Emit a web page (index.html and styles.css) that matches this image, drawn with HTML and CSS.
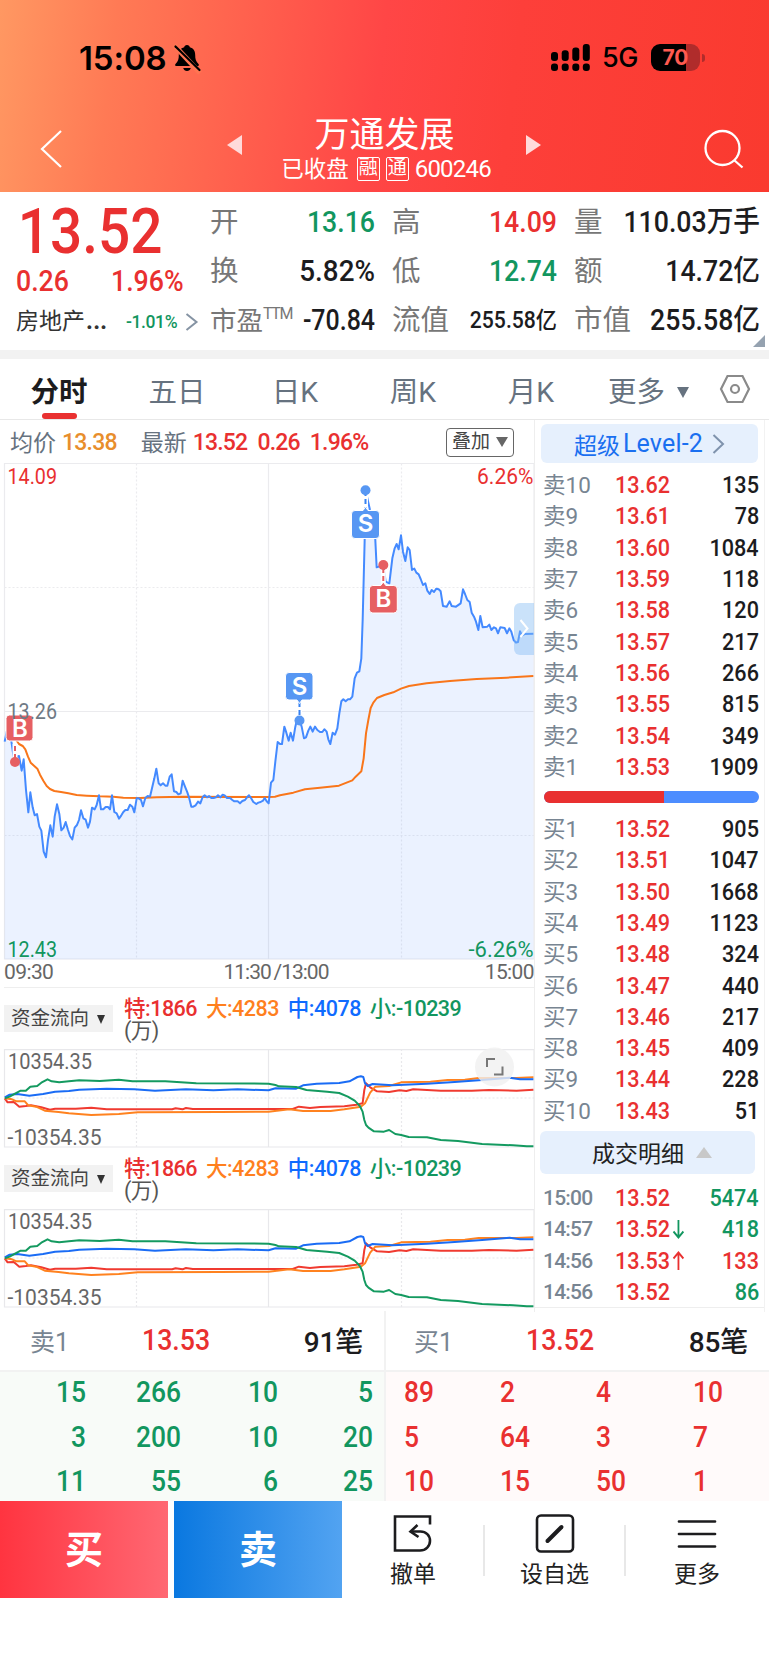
FILE: index.html
```html
<!DOCTYPE html>
<html lang="zh-CN">
<head>
<meta charset="utf-8">
<title>万通发展 600246</title>
<link rel="stylesheet" href="styles.css">
</head>
<body>
<div class="app">
  <header class="top">
    <div class="status">
      <span class="clock">15:08</span>
      <svg class="bell" width="27" height="28" viewBox="0 0 27 28"><path d="M13 1c-1.800 0-2.500 1-2.800 2.200C6.500 4.200 4.800 7 4.800 11c0 4-.6 6.300-3.300 9-.8 1-.4 2 .7 2h21.600c1.100 0 1.500-1 .7-2-2.700-2.700-3.300-5-3.300-9 0-4-1.700-6.800-5.400-7.800C15.500 2 14.800 1 13 1zM9.200 24h7.600c-.5 2-2 3-3.800 3s-3.300-1-3.800-3z"/><path d="M0 1 26 29" stroke="#ff7552" stroke-width="5"/><path d="M1.500 2.500 25.500 26" stroke="#000" stroke-width="2.200" stroke-linecap="round"/></svg>
      <svg class="signal" width="40" height="28" viewBox="0 0 40 28"><g><rect x="0" y="8" width="7" height="9" rx="3"/><rect x="10.700" y="6.300" width="7" height="10.700" rx="3"/><rect x="21.300" y="3.400" width="7" height="13.600" rx="3"/><rect x="31.800" y="0" width="7" height="17" rx="3"/><rect x="0" y="19.500" width="7" height="7.500" rx="3"/><rect x="10.700" y="19.500" width="7" height="7.500" rx="3"/><rect x="21.300" y="19.500" width="7" height="7.500" rx="3"/><rect x="31.800" y="19.500" width="7" height="7.500" rx="3"/></g></svg>
      <span class="net">5G</span>
      <span class="battery"><span class="level">70</span></span><i class="nub"></i>
    </div>
    <div class="nav">
      <svg class="back" width="24" height="42" viewBox="0 0 24 42"><path d="M22 3 3 21l19 18" fill="none" stroke="#fff" stroke-width="2.200"/></svg>
      <svg class="prev" width="15" height="20" viewBox="0 0 15 20"><path d="M15 0v20L0 10z" fill="#ffdada"/></svg>
      <div class="title"><h1>万通发展</h1><p><span>已收盘</span><b>融</b><b>通</b><em class="n">600246</em></p></div>
      <svg class="next" width="15" height="20" viewBox="0 0 15 20"><path d="M0 0v20l15-10z" fill="#ffdada"/></svg>
      <svg class="find" width="42" height="42" viewBox="0 0 42 42"><g fill="none" stroke="#fff" stroke-width="2.300"><circle cx="19.500" cy="20" r="17"/><path d="m31 32 8.500 7.500"/></g></svg>
    </div>
  </header>

  <section class="quote">
    <div class="price">
      <div class="big red">13.52</div>
      <div class="chg red"><span>0.26</span><span>1.96%</span></div>
      <div class="sector"><span>房地产<u>…</u></span><em class="green">-1.01%</em><svg width="13" height="18" viewBox="0 0 13 18"><path d="m1.500 1 10 8-10 8" fill="none" stroke="#8593a3" stroke-width="2"/></svg></div>
    </div>
    <dl class="stats">
      <dt>开</dt><dd class="green">13.16</dd><dt>高</dt><dd class="red">14.09</dd><dt>量</dt><dd>110.03万手</dd>
      <dt>换</dt><dd class="pct">5.82%</dd><dt>低</dt><dd class="green">12.74</dd><dt>额</dt><dd>14.72亿</dd>
      <dt class="ttm">市盈<sup>TTM</sup></dt><dd class="pe">-70.84</dd><dt>流值</dt><dd class="small">255.58亿</dd><dt>市值</dt><dd>255.58亿</dd>
    </dl>
    <i class="corner"></i>
  </section>

  <nav class="tabs">
    <span class="on">分时</span><span>五日</span><span>日K</span><span>周K</span><span>月K</span><span class="more">更多<i></i></span>
    <svg width="32" height="30" viewBox="0 0 32 30"><g fill="none" stroke="#8a8a8a" stroke-width="2.200"><path d="M8.500 2h15L30 15l-6.500 13h-15L2 15z"/><circle cx="16" cy="15" r="4"/></g></svg>
  </nav>

  <main class="body">
    <div class="left">
      <div class="avg"><span>均价</span><b class="amber">13.38</b><span class="gap">最新</span><b class="red">13.52</b><b class="red">0.26</b><b class="red">1.96%</b><button>叠加<i></i></button></div>
      <svg class="chart" width="534" height="498" viewBox="0 462 534 498">
        <g fill="none" stroke="#ebebee" stroke-width="1.200"><path d="M4.500 463.500h529.500v495.500h-529.500zM4.500 711.500h529.500M268.500 463.500v495.500"/><path d="M4.500 587.500h529.500M4.500 835.500h529.500M136.500 463.500v495.500M401.500 463.500v495.500" stroke-dasharray="2 2"/></g>
        <g transform="translate(0 460) scale(.33333)">
          <path fill="#4d8dff" fill-opacity=".11" d="M14 1498V845L20 815 27 800 35 850 40 885 45 907 50 890 57 888 65 932 71 898 78 990 85 1057 91 997 98 1042 104 1066 111 1062 118 1100 124 1112 131 1175 138 1192 144 1140 151 1096 158 1130 164 1070 171 1033 178 1062 184 1111 191 1103 197 1086 204 1110 210 1128 217 1138 224 1103 231 1095 237 1080 243 1051 250 1075 257 1079 264 1103 270 1085 276 1043 284 1048 290 1035 297 1006 303 1048 317 1041 330 1048 336 1006 343 1056 357 1076 370 1056 383 1050 390 1034 403 1057 410 1015 423 1020 429 1039 436 1014 450 1010 456 985 469 926 476 970 502 977 515 943 522 994 542 1000 548 962 562 997 574 1040 594 1025 608 1011 661 1012 674 1006 720 1030 747 1006 769 1032 794 1014 806 1030 813 968 820 960 826 905 833 846 846 852 853 800 866 842 872 818 879 842 892 775 905 800 912 835 931 800 945 800 960 816 980 815 991 852 998 818 1005 824 1012 805 1024 724 1050 718 1057 710 1064 655 1078 634 1084 595 1088 480 1094 240 1097 92 1110 150 1118 170 1125 220 1130 322 1150 315 1157 365 1168 370 1177 295 1190 252 1196 268 1203 226 1216 303 1223 262 1229 270 1236 330 1256 343 1269 375 1276 370 1289 402 1309 386 1322 394 1329 438 1368 440 1382 430 1389 388 1402 420 1409 426 1415 458 1428 485 1435 510 1441 468 1448 502 1488 505 1494 520 1514 504 1534 515 1548 548 1560 514 1600 521V1498z"/>
          <polyline class="ln amber-ln" points="27,792 35,805 45,835 57,852 68,858 76,868 84,890 92,908 102,917 112,926 120,944 130,962 140,978 150,987 163,993 183,996 205,1000 230,1005 260,1007 300,1009 340,1010 370,1013 420,1014 470,1012 550,1010 806,1011 825,1010 840,1006 880,998 915,988 960,983 1017,977 1057,961 1067,950 1084,934 1091,895 1098,820 1105,780 1112,744 1120,728 1131,714 1153,705 1180,697 1203,686 1227,678 1280,670 1350,663 1430,657 1520,653 1600,648"/>
          <polyline class="ln" points="14,845 20,815 27,800 35,850 40,885 45,907 50,890 57,888 65,932 71,898 78,990 85,1057 91,997 98,1042 104,1066 111,1062 118,1100 124,1112 131,1175 138,1192 144,1140 151,1096 158,1130 164,1070 171,1033 178,1062 184,1111 191,1103 197,1086 204,1110 210,1128 217,1138 224,1103 231,1095 237,1080 243,1051 250,1075 257,1079 264,1103 270,1085 276,1043 284,1048 290,1035 297,1006 303,1048 310,1048 317,1041 324,1041 330,1048 336,1006 343,1056 350,1060 357,1076 364,1066 370,1056 376,1050 383,1050 390,1034 397,1040 403,1057 410,1015 416,1015 423,1020 429,1039 436,1014 443,1008 450,1010 456,985 463,955 469,926 476,970 482,976 489,970 496,977 502,977 509,950 515,943 522,994 529,996 535,1003 542,1000 548,962 555,980 562,997 567,1012 574,1040 580,1040 587,1036 594,1025 601,1030 608,1011 614,1006 621,1012 627,1008 634,1014 641,1014 648,1012 654,1006 661,1012 668,1004 674,1006 681,1014 690,1014 697,1020 703,1024 713,1024 720,1030 727,1023 735,1020 741,1012 747,1006 753,1014 760,1026 769,1032 775,1028 782,1026 789,1022 794,1014 800,1024 806,1030 813,968 820,960 826,905 833,846 840,852 846,852 853,800 859,818 866,842 872,818 879,842 886,800 892,775 898,780 905,800 912,835 918,832 925,812 931,800 938,815 945,800 952,810 960,816 967,816 973,808 980,815 985,838 991,852 998,818 1005,824 1012,805 1018,760 1024,724 1030,718 1037,724 1044,718 1050,718 1057,710 1064,655 1071,638 1078,634 1084,595 1088,480 1094,240 1097,92 1110,150 1118,170 1125,220 1130,322 1150,315 1157,365 1168,370 1177,295 1184,265 1190,252 1196,268 1203,226 1209,275 1216,303 1223,262 1229,270 1236,330 1243,326 1249,338 1256,343 1262,357 1269,375 1276,370 1282,392 1289,402 1295,390 1302,396 1309,386 1316,388 1322,394 1329,438 1340,440 1349,424 1355,438 1368,440 1382,430 1389,388 1395,402 1402,420 1409,426 1415,458 1422,470 1428,485 1435,510 1441,468 1448,502 1462,500 1468,494 1474,510 1482,502 1488,505 1494,520 1501,502 1514,504 1521,520 1528,505 1534,515 1541,540 1548,548 1554,546 1560,514 1566,526 1574,522 1600,521"/>
        </g>
        <path d="M534 603h-14a6 6 0 0 0-6 6v40a6 6 0 0 0 6 6h14z" fill="#80b9f2" fill-opacity=".42"/>
        <path d="m520.500 620 7 8.500-7 8.500" fill="none" stroke="#fff" stroke-width="2"/>
        <g class="mk sell"><path d="M365.500 491v18" class="halo"/><path d="M365.500 491v22" class="dash"/><circle cx="365.500" cy="490.200" r="5"/><path class="bx" d="M355 510.500h8l2.500-3.500 2.500 3.500h8q3.500 0 3.500 3.500v21q0 3.500-3.500 3.500h-21q-3.500 0-3.500-3.500v-21q0-3.500 3.500-3.500z"/><text x="365.500" y="532">S</text></g>
        <g class="mk buy"><path d="M383.300 570v14" class="halo"/><path d="M383.300 568v18" class="dash"/><circle cx="383.300" cy="565" r="5"/><path class="bx" d="M373 585.500h7.800l2.500-3.500 2.500 3.500h8q3.500 0 3.500 3.500v20.500q0 3.500-3.500 3.500h-21q-3.500 0-3.500-3.500v-20.500q0-3.500 3.500-3.500z"/><text x="383.300" y="606.500">B</text></g>
        <g class="mk sell"><path d="M299.500 702v18" class="halo"/><path d="M299.500 702v18" class="dash"/><circle cx="299.500" cy="720.500" r="5"/><path class="bx" d="M289 672.500h20.500q3.500 0 3.500 3.500v20.500q0 3.500-3.500 3.500h-7.500l-2.500 3.500-2.500-3.500h-8q-3.500 0-3.500-3.500v-20.500q0-3.500 3.500-3.500z"/><text x="299.500" y="695">S</text></g>
        <g class="mk buy"><path d="M15 744v18" class="halo"/><path d="M15 746v16" class="dash"/><circle cx="15" cy="762" r="5"/><rect class="bx" x="6" y="715" width="27" height="26" rx="3.500"/><text x="20" y="737">B</text></g>
        <g class="axis"><text x="7.500" y="484" class="r" textLength="49.500" lengthAdjust="spacingAndGlyphs">14.09</text><text x="7.500" y="719" textLength="49.500" lengthAdjust="spacingAndGlyphs">13.26</text><text x="7.500" y="957" class="g" textLength="49.500" lengthAdjust="spacingAndGlyphs">12.43</text><text x="477" y="484" class="r" textLength="56.500" lengthAdjust="spacingAndGlyphs">6.26%</text><text x="468.500" y="957" class="g" textLength="65" lengthAdjust="spacingAndGlyphs">-6.26%</text></g>
      </svg>
      <div class="times"><span>09:30</span><span>11:30 /13:00</span><span>15:00</span></div>
      <div class="flow">
        <div class="fhead"><span class="pick">资金流向<i></i></span><p><b class="red">特:1866</b> <b class="orange">大:4283</b> <b class="blue">中:4078</b> <b class="green">小:-10239</b><br>(万)</p></div>
        <svg class="fund" width="534" height="99" viewBox="0 0 534 99">
          <g fill="none" stroke="#e8e8eb" stroke-width="1.200"><path d="M4.500.600h529.500v97.400h-529.500zM268.500 0v98"/><path d="M4.500 49h529.500M136.500 0v98M401.500 0v98" stroke-dasharray="2 2"/></g>
          <g id="lines" transform="translate(0 -69) scale(.34435 .33333)">
            <polyline class="ln l-red" points="14,355 22,367 40,366 56,380 75,378 90,376 120,382 145,389 160,386 220,386 265,383 310,388 500,388 510,385 530,388 540,384 560,387 850,387 868,380 900,384 930,381 1000,379 1035,374 1053,370 1058,330 1063,310 1075,322 1095,334 1130,336 1160,331 1180,333 1200,328 1280,332 1370,332 1420,330 1500,332 1549,329"/>
            <polyline class="ln l-orange" points="14,355 35,358 48,364 72,364 82,376 105,380 130,392 170,396 200,400 265,405 345,402 400,397 640,396 780,395 840,388 880,393 960,393 1000,388 1048,380 1060,370 1075,338 1090,320 1130,318 1165,307 1250,305 1300,300 1350,299 1390,294 1500,294 1549,292"/>
            <polyline class="ln l-blue" points="14,352 28,344 50,342 85,347 125,342 160,335 200,333 230,329 310,326 390,328 450,332 540,328 620,331 690,328 780,331 800,325 860,326 880,316 920,311 985,309 1015,304 1038,291 1048,289 1055,291 1060,310 1068,318 1082,312 1140,316 1240,311 1320,306 1400,300 1480,293 1510,298 1549,298"/>
            <polyline class="ln l-green" points="14,355 28,350 45,340 60,332 75,332 88,320 108,318 120,308 138,298 150,304 172,307 200,304 230,301 290,303 345,299 385,304 480,304 570,310 780,311 800,315 810,319 860,321 890,330 950,335 985,339 1010,350 1030,362 1045,378 1053,395 1058,420 1063,435 1070,443 1086,454 1115,455 1130,450 1148,462 1165,465 1187,471 1240,472 1280,480 1330,483 1400,492 1490,496 1530,499 1549,499"/>
          </g>
          <g class="axis"><text x="8" y="19.500" textLength="84" lengthAdjust="spacingAndGlyphs">10354.35</text><text x="7.500" y="96" textLength="94" lengthAdjust="spacingAndGlyphs">-10354.35</text></g>
          <circle cx="494.500" cy="18" r="19.500" fill="#f0f0f0" fill-opacity=".8"/><path d="M487 18V10h8M502.500 17.500v8h-8.500" fill="none" stroke="#777" stroke-width="2"/>
        </svg>
      </div>
      <div class="flow">
        <div class="fhead"><span class="pick">资金流向<i></i></span><p><b class="red">特:1866</b> <b class="orange">大:4283</b> <b class="blue">中:4078</b> <b class="green">小:-10239</b><br>(万)</p></div>
        <svg class="fund" width="534" height="99" viewBox="0 0 534 99">
          <g fill="none" stroke="#e8e8eb" stroke-width="1.200"><path d="M4.500.600h529.500v97.400h-529.500zM268.500 0v98"/><path d="M4.500 49h529.500M136.500 0v98M401.500 0v98" stroke-dasharray="2 2"/></g>
          <use href="#lines"/>
          <g class="axis"><text x="8" y="19.500" textLength="84" lengthAdjust="spacingAndGlyphs">10354.35</text><text x="7.500" y="96" textLength="94" lengthAdjust="spacingAndGlyphs">-10354.35</text></g>
        </svg>
      </div>
    </div>

    <aside class="side">
      <div class="pill level2">超级<span>Level-2</span><svg width="13" height="20" viewBox="0 0 13 20"><path d="m1.500 1 9.500 9-9.500 9" fill="none" stroke="#7f93ad" stroke-width="2"/></svg></div>
      <ul class="book">
        <li><span>卖10</span><b>13.62</b><em>135</em></li>
        <li><span>卖9</span><b>13.61</b><em>78</em></li>
        <li><span>卖8</span><b>13.60</b><em>1084</em></li>
        <li><span>卖7</span><b>13.59</b><em>118</em></li>
        <li><span>卖6</span><b>13.58</b><em>120</em></li>
        <li><span>卖5</span><b>13.57</b><em>217</em></li>
        <li><span>卖4</span><b>13.56</b><em>266</em></li>
        <li><span>卖3</span><b>13.55</b><em>815</em></li>
        <li><span>卖2</span><b>13.54</b><em>349</em></li>
        <li><span>卖1</span><b>13.53</b><em>1909</em></li>
      </ul>
      <div class="ratio"><i></i></div>
      <ul class="book">
        <li><span>买1</span><b>13.52</b><em>905</em></li>
        <li><span>买2</span><b>13.51</b><em>1047</em></li>
        <li><span>买3</span><b>13.50</b><em>1668</em></li>
        <li><span>买4</span><b>13.49</b><em>1123</em></li>
        <li><span>买5</span><b>13.48</b><em>324</em></li>
        <li><span>买6</span><b>13.47</b><em>440</em></li>
        <li><span>买7</span><b>13.46</b><em>217</em></li>
        <li><span>买8</span><b>13.45</b><em>409</em></li>
        <li><span>买9</span><b>13.44</b><em>228</em></li>
        <li><span>买10</span><b>13.43</b><em>51</em></li>
      </ul>
      <div class="pill deals">成交明细<i></i></div>
      <ul class="book ticks">
        <li><span>15:00</span><b>13.52</b><em class="green">5474</em></li>
        <li><span>14:57</span><b>13.52<svg class="green" width="13" height="22" viewBox="0 0 13 22"><path d="M6.500 2v17M1 13.500l5.500 6 5.500-6"/></svg></b><em class="green">418</em></li>
        <li><span>14:56</span><b>13.53<svg class="red" width="13" height="22" viewBox="0 0 13 22"><path d="M6.500 20V3M1 8.500l5.500-6 5.500 6"/></svg></b><em class="red">133</em></li>
        <li><span>14:56</span><b>13.52</b><em class="green">86</em></li>
      </ul>
    </aside>
  </main>

  <section class="queue">
    <div class="qcol sellq">
      <div class="qhead"><span>卖1</span><b>13.53</b><em>91笔</em></div>
      <div class="grid green"><span>15</span><span>266</span><span>10</span><span>5</span><span>3</span><span>200</span><span>10</span><span>20</span><span>11</span><span>55</span><span>6</span><span>25</span></div>
    </div>
    <div class="qcol buyq">
      <div class="qhead"><span>买1</span><b>13.52</b><em>85笔</em></div>
      <div class="grid red"><span>89</span><span>2</span><span>4</span><span>10</span><span>5</span><span>64</span><span>3</span><span>7</span><span>10</span><span>15</span><span>50</span><span>1</span></div>
    </div>
  </section>

  <footer class="bar">
    <button class="act buyb">买</button><button class="act sellb">卖</button>
    <div class="tool"><svg width="42" height="40" viewBox="0 0 42 40"><g fill="none" stroke="#1c1c1e" stroke-width="2.600"><path d="M38 10.500V2.500H3v34h25c6 0 10-4.500 10-9.700 0-5.500-4-9.300-9.500-9.300H19"/><path d="m25.500 11-7 6.500 8 5.500"/></g></svg><span>撤单</span></div>
    <div class="tool mid"><svg width="42" height="40" viewBox="0 0 42 40"><g fill="none" stroke="#1c1c1e" stroke-width="2.600"><rect x="3" y="1.500" width="36" height="36" rx="4"/><path d="M13.500 27 27.500 13" stroke-width="4" stroke-linecap="round"/></g></svg><span>设自选</span></div>
    <div class="tool last"><svg width="42" height="40" viewBox="0 0 42 40"><path d="M3 7.500h36M3 20h36M3 32.500h36" stroke="#1c1c1e" stroke-width="2.700" stroke-linecap="round"/></svg><span>更多</span></div>
  </footer>
</div>
</body>
</html>
```
FILE: styles.css
```css
* { box-sizing: border-box; margin: 0; padding: 0; }
body { width: 769px; height: 1665px; background: #fff; color: #1c1c1e; font-family: Roboto, "Noto Sans CJK SC", sans-serif; overflow: hidden; }
i, em { font-style: normal; }
u { text-decoration: none; }
ul { list-style: none; }
button { border: 0; background: none; font: inherit; color: inherit; }
svg { display: block; flex: none; overflow: visible; }
.red { color: #e93030; }
.green { color: #12965f; }
.blue { color: #0f6bff; }
.orange { color: #ff7f1e; }
.amber { color: #e88e2c; }

.top { height: 192px; background: linear-gradient(97deg, #ff9862 0%, #ff7a55 15%, #ff4646 49%, #fd3f3a 66%, #fa3a2f 100%); }
.status { height: 100px; padding: 15px 0 0 79px; display: flex; align-items: center; color: #000; font-family: Inter, sans-serif; }
.clock { width: 95px; font-size: 33px; font-weight: 600; letter-spacing: -.1px; white-space: nowrap; }
.signal { margin-left: 350px; }
.net { width: 36px; margin-left: 11px; font-size: 27px; font-weight: 500; letter-spacing: -.5px; white-space: nowrap; }
.battery { margin-left: 13px; width: 49px; height: 27px; border-radius: 9px; background: linear-gradient(90deg, #000 71%, #b02c2b 71%); display: flex; align-items: center; justify-content: center; }
.level { color: #ff5a50; font-size: 21px; font-weight: 700; }
.nub { width: 3px; height: 8px; margin-left: 2px; border-radius: 0 3px 3px 0; background: #b02c2b; }
.nav { height: 92px; display: flex; align-items: center; padding: 5px 24px 0 39px; color: #fff; }
.prev { margin-left: 164px; margin-top: -7px; }
.title { width: 285px; display: flex; flex-direction: column; align-items: center; }
.title h1 { font-size: 35px; font-weight: 400; line-height: 40px; margin-top: -3px; }
.title p { display: flex; align-items: center; font-size: 22.500px; line-height: 26px; margin-bottom: -3px; margin-top: 0; padding-left: 3px; }
.title p b { width: 23px; height: 24px; margin-left: 6px; border: 1.500px solid #fff; border-radius: 2px; font-size: 19px; line-height: 20px; font-weight: 400; display: flex; justify-content: center; }
.title p b:first-of-type { margin-left: 8px; }
.title p em { margin-left: 6px; font-size: 24px; letter-spacing: -.8px; }
.next { margin-top: -7px; margin-left: -1px; }
.find { margin-left: auto; margin-top: 0; }

.quote { position: relative; height: 158px; display: flex; }
.price { width: 210px; padding-left: 16px; }
.big { margin-top: 10px; height: 60px; line-height: 60px; font-size: 63px; font-weight: 500; padding-left: 2px; transform: scaleX(.9); transform-origin: left; }
.chg { height: 37px; line-height: 39px; font-size: 29px; font-weight: 500; display: flex; }
.chg span { transform: scaleX(.92); transform-origin: left; }
.chg span:first-child { width: 95px; }
.sector { height: 46px; display: flex; align-items: center; font-size: 23px; line-height: 30px; color: #333; }
.sector span { width: 110px; white-space: nowrap; }
.sector u { font-size: 34px; line-height: 0; }
.sector em { width: 59px; font-size: 17.500px; font-weight: 500; letter-spacing: -.4px; }
.stats { flex: 1; display: grid; grid-template-columns: 82px 83px 80px 102px 85px 118px; grid-template-rows: repeat(3, 49px); padding-top: 6px; justify-content: start; }
.stats dt, .stats dd { line-height: 49px; white-space: nowrap; }
.stats dt { color: #777; font-size: 28.500px; }
.stats dt:nth-of-type(3n+2), .stats dt:nth-of-type(3n) { padding-left: 17px; }
.stats .ttm { font-size: 26.500px; }
.stats sup { font-size: 16px; line-height: 0; vertical-align: 11px; letter-spacing: -1.400px; }
.stats dd { display: flex; justify-content: flex-end; font-size: 29px; font-weight: 500; transform: scaleX(.92); transform-origin: right; }
.stats .small { font-size: 23px; }
.stats .pct { transform: scaleX(.96); }
.stats .pe { transform: scaleX(.86); }
.corner { position: absolute; right: 4px; bottom: 3px; border-left: 12px solid transparent; border-bottom: 12px solid #95a2b0; }

.tabs { height: 70px; border-top: 9px solid #f2f2f2; border-bottom: 1px solid #e8e8e8; display: flex; align-items: center; font-size: 28.500px; color: #66727f; }
.tabs span { width: 118px; height: 60px; line-height: 67px; text-align: center; display: flex; justify-content: center; }
.tabs span.on { position: relative; color: #1c1c1e; font-weight: 700; }
.tabs .on::after { content: ""; position: absolute; left: 42px; bottom: 0; width: 35px; height: 6px; border-radius: 3px; background: #e93030; }
.tabs .more { width: 129px; justify-content: flex-start; padding-left: 18px; }
.tabs .more i { height: 11px; border: 6px solid transparent; border-top: 11px solid #66727f; border-bottom: 0; margin: 28px 0 0 12px; }

.body { display: flex; height: 892px; }
.left { width: 534px; }
.avg { height: 42px; display: flex; align-items: center; font-size: 23px; color: #66727f; padding: 2px 20px 0 10px; white-space: nowrap; }
.avg span { margin-top: -3px; }
.avg b { margin-left: 6px; font-weight: 500; font-size: 23px; letter-spacing: -.8px; }
.avg .red + .red { margin-left: 10px; }
.avg .gap { margin-left: 24px; }
.avg button { margin-left: auto; width: 68px; height: 29px; border: 1.500px solid #666; border-radius: 4px; font-size: 19px; line-height: 26px; color: #444; display: flex; align-items: center; justify-content: center; }
.avg button i, .pick i { border: 6.500px solid transparent; border-top: 10px solid #666; border-bottom: 0; margin-left: 6px; }
.ln { fill: none; stroke: #448aff; stroke-width: 2px; stroke-linejoin: round; vector-effect: non-scaling-stroke; }
.amber-ln { stroke: #f9761a; }
.l-red { stroke: #f03a30; }
.l-orange { stroke: #ff821f; }
.l-blue { stroke: #1a6cf5; }
.l-green { stroke: #149a60; }
.mk text { fill: #fff; font: 600 24px Inter, sans-serif; text-anchor: middle; }
.mk .bx { stroke: #fff; stroke-width: 1; }
.sell { fill: #5797f3; }
.buy { fill: #e65f62; }
.halo { stroke: #fff; stroke-width: 5; }
.dash { stroke-width: 2; stroke-dasharray: 5 3; }
.sell .dash { stroke: #3681f2; }
.buy .dash { stroke: #e65f62; }
.axis text { font: 400 22px Roboto, sans-serif; fill: #666; }
.chart .axis text { fill: #6f7a85; }
.chart .axis .r { fill: #e93030; }
.chart .axis .g { fill: #12965f; }
.times { height: 28px; margin-left: 4px; display: flex; justify-content: space-between; font-size: 21px; line-height: 25px; letter-spacing: -.6px; color: #666; border-bottom: 1.500px solid #eee; white-space: nowrap; }
.times span:nth-child(2) { padding-left: 14px; letter-spacing: -1px; word-spacing: -1.500px; }
.flow { height: 160px; }
.fhead { height: 61px; padding: 8px 0 0 4px; display: flex; align-items: center; }
.pick { width: 109px; height: 27px; margin-top: -9px; background: #f2f2f2; display: flex; align-items: center; padding-left: 7px; font-size: 19.500px; line-height: 25px; color: #444; }
.pick i { border-width: 9px 4px 0; border-top-color: #333; margin: 3px 0 0 8px; }
.fhead p { margin: -6px 0 0 11px; font-size: 21.500px; line-height: 22px; color: #555; white-space: nowrap; word-spacing: 4px; letter-spacing: -.5px; }
.fhead b { font-weight: 500; }

.side { width: 231px; border-left: 1px solid #eee; border-right: 1px solid #f2f2f2; display: flex; flex-direction: column; }
.pill { margin: 4px 0 0 5px; width: 217px; height: 39px; border-radius: 6px; background: #e6f0fd; display: flex; align-items: center; justify-content: center; font-size: 23px; }
.level2 { color: #1a6ff0; margin: 4px 0 1px 6px; gap: 3px; }
.level2 span { font-size: 25px; letter-spacing: .2px; }
.level2 svg { margin-left: 6px; }
.book { padding: 6px 5px 0 8px; }
.book li { height: 31.300px; display: grid; grid-template-columns: 72px 1fr auto; align-items: center; line-height: 31px; }
.book span { color: #788592; font-size: 22.500px; white-space: nowrap; }
.book b { color: #e93030; font-size: 24px; font-weight: 500; display: flex; align-items: center; transform: scaleX(.9); transform-origin: left; }
.book em { font-size: 24px; font-weight: 500; transform: scaleX(.9); transform-origin: right; }
.book svg { margin-left: 3px; }
.book svg path { fill: none; stroke: currentColor; stroke-width: 2; }
.ratio { height: 12px; width: 215px; margin: 8px 0 5px 9px; border-radius: 6px; background: #4d8dff; overflow: hidden; }
.ratio i { display: block; width: 120px; height: 12px; background: #e93030; }
.deals { width: 215px; height: 43px; margin-top: 4px; color: #222; padding-left: 9px; }
.deals i { border: 8px solid transparent; border-bottom: 11px solid #c8c8c8; border-top: 0; margin-left: 12px; }
.ticks span { font-size: 21px; font-weight: 500; letter-spacing: -.8px; }
.ticks { border-bottom: 1px solid #eee; padding-top: 8px; }
.ticks li { line-height: 32px; }

.queue { height: 190px; margin-top: -1px; display: flex; }
.qcol { width: 383px; }
.sellq { width: 386px; border-right: 2px solid #f2f2f2; }
.qhead { height: 61px; border-bottom: 2px solid #f2f2f2; display: flex; align-items: center; justify-content: space-between; padding: 0 21px 2px 30px; font-size: 28px; }
.qhead span { width: 112px; color: #788592; font-size: 25px; }
.qhead b { flex: 1; font-weight: 500; color: #e93030; font-size: 29px; transform: scaleX(.92); transform-origin: left; }
.buyq .qhead { padding-left: 28px; }
.qhead em { font-weight: 500; letter-spacing: -.2px; }
.grid { height: 129px; display: grid; grid-template-rows: repeat(3, 44.700px); align-content: center; align-items: center; font-size: 29px; font-weight: 500; }
.grid span { transform: scaleX(.91); }
.sellq .grid { grid-template-columns: 86px 95px 97px 95px; text-align: right; background: #f8fbf8; }
.sellq .grid span { transform-origin: right; }
.buyq .grid { grid-template-columns: 96px 96px 97px 75px; padding-left: 18px; background: #fffafa; }
.buyq .grid span { transform-origin: left; }

.bar { height: 97px; display: flex; }
.act { width: 168px; height: 97px; margin-right: 6px; padding-bottom: 6px; color: #fff; font-size: 38px; font-weight: 700; }
.buyb { background: linear-gradient(90deg, #ff3440, #ff6873); }
.sellb { background: linear-gradient(90deg, #0a78e0, #52a3f1); }
.tool { width: 135px; display: flex; flex-direction: column; align-items: center; padding: 13px 5px 0 0; font-size: 23px; line-height: 34px; color: #222; }
.tool svg { margin-bottom: 4px; }
.mid { width: 143px; padding-right: 0; background: linear-gradient(#e8e8e8, #e8e8e8) 0 24px / 2px 51px no-repeat, linear-gradient(#e8e8e8, #e8e8e8) 100% 24px / 2px 51px no-repeat; }
.last { width: 142px; padding-right: 0; }
```
